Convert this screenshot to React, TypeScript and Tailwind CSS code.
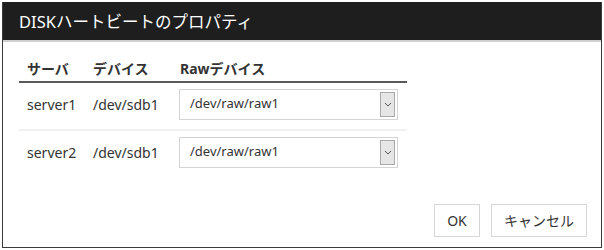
import React from 'react';

const rows = [
  { server: 'server1', device: '/dev/sdb1', raw: '/dev/raw/raw1' },
  { server: 'server2', device: '/dev/sdb1', raw: '/dev/raw/raw1' },
];

function RawSelect({ value }: { value: string }) {
  return (
    <div className="flex h-[31px] w-[219px] items-stretch border border-[#d4d4d4] bg-white">
      <span className="flex-1 pl-[10px] pt-[4px] text-[13px] text-[#333]">{value}</span>
      <span className="m-[2px] flex w-[15px] items-center justify-center border border-[#a9a9a9] bg-[#e6e6e6]">
        <svg width="8" height="5" viewBox="0 0 8 5">
          <path d="M1 1l3 3 3-3" fill="none" stroke="#555" strokeWidth="1" />
        </svg>
      </span>
    </div>
  );
}

export default function App() {
  return (
    <div
      className="h-[250px] w-[604px] bg-white pl-[2px] pt-[2px]"
      style={{ fontFamily: '"Noto Sans", "Noto Sans CJK JP", sans-serif' }}
    >
      <div className="flex h-[246px] w-[600px] flex-col border-x border-b border-[#3a3a3a] bg-white">
        <div className="flex h-[40px] items-center border-b-2 border-[#d0d0d0] bg-[#1e1e1e] pl-[16px] pt-[3px] text-[16.5px] text-white">
          DISKハートビートのプロパティ
        </div>

        <div className="flex flex-1 flex-col pl-[16px] pr-[14px] pt-[14px]">
          <div className="w-[388px]">
            <div className="flex h-[27px] items-center border-b-2 border-[#5a5a5a] text-[14px] font-bold text-[#333]">
              <span className="w-[74px] pl-[8px]">サーバ</span>
              <span className="w-[87px]">デバイス</span>
              <span>Rawデバイス</span>
            </div>
            {rows.map((r, i) => (
              <div
                key={r.server}
                className={`flex items-center pt-[6px] text-[14px] text-[#333] ${i === 0 ? 'border-b-2 border-[#f0f0f0] pb-[9px]' : ''}`}
              >
                <span className="w-[74px] pl-[8px]">{r.server}</span>
                <span className="w-[86px]">{r.device}</span>
                <RawSelect value={r.raw} />
              </div>
            ))}
          </div>

          <div className="mt-auto mb-[10px] flex justify-end gap-[11px]">
            <button className="h-[33px] w-[46px] border border-[#d6d6d6] bg-white text-[14px] text-[#333]">OK</button>
            <button className="h-[33px] w-[96px] border border-[#d6d6d6] bg-white text-[14px] text-[#333]">キャンセル</button>
          </div>
        </div>
      </div>
    </div>
  );
}
